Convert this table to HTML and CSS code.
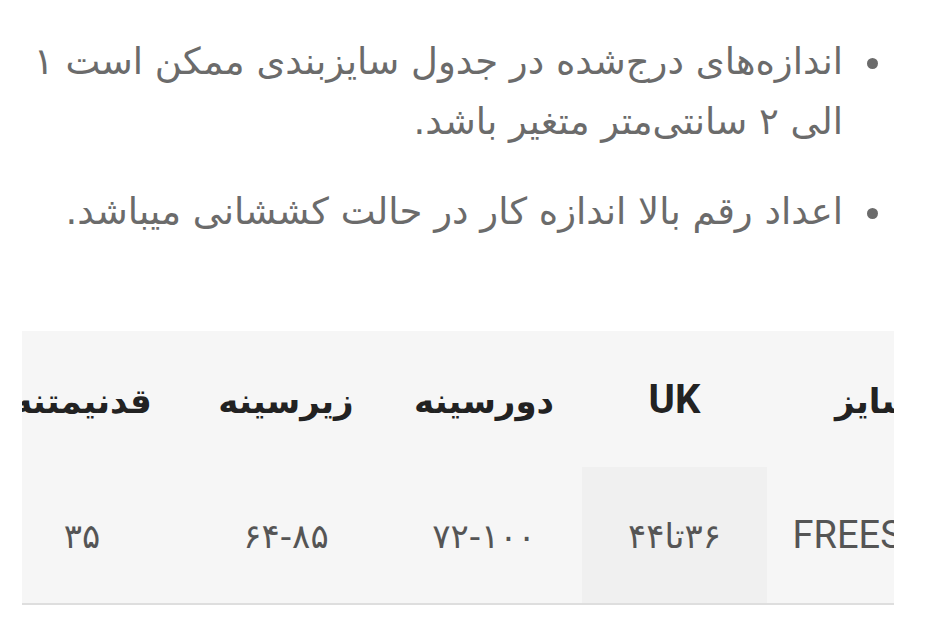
FILE: index.html
```html
<!DOCTYPE html>
<html lang="fa" dir="rtl">
<head>
  <meta charset="UTF-8" />
  <meta name="viewport" content="width=device-width, initial-scale=1.0" />
  <title>جدول سایزبندی</title>
  <link rel="stylesheet" href="styles.css">
</head>
<body>
  <div class="page">
    <!-- Notes -->
    <ul class="notes">
      <li>اندازه‌های درج‌شده در جدول سایزبندی ممکن است ۱ الی ۲ سانتی‌متر متغیر باشد.</li>
      <li>اعداد رقم بالا اندازه کار در حالت کششانی میباشد.</li>
    </ul>

    <!-- Size table -->
    <div class="table-wrap">
      <table class="sizes">
        <colgroup>
          <col class="c-size" />
          <col class="c-uk" />
          <col class="c-chest" />
          <col class="c-under" />
          <col class="c-len" />
        </colgroup>
        <thead>
          <tr>
            <th><span class="fa">سایز</span></th>
            <th>UK</th>
            <th><span class="fa">دورسینه</span></th>
            <th><span class="fa">زیرسینه</span></th>
            <th><span class="fa">قدنیمتنه</span></th>
          </tr>
        </thead>
        <tbody>
          <tr>
            <td>FREESIZE</td>
            <td class="hover"><span class="fa">۳۶تا۴۴</span></td>
            <td><span class="fa">۷۲-۱۰۰</span></td>
            <td><span class="fa">۶۴-۸۵</span></td>
            <td><span class="fa">۳۵</span></td>
          </tr>
        </tbody>
      </table>
    </div>
  </div>
</body>
</html>
```

FILE: styles.css
```css
/* Reset */
* { box-sizing: border-box; margin: 0; padding: 0; }
html, body { width: 100%; height: 100%; background: #fff; }
body { font-family: "DejaVu Sans", sans-serif; overflow: hidden; }

.page { padding: 32px 36px 0 22px; }

/* Notes list */
.notes { list-style: none; }
.notes li {
  position: relative;
  padding-right: 51px;
  font-size: 37px;
  line-height: 60px;
  color: #6b6b6b;
  margin-bottom: 30px;
}
.notes li::before {
  content: "";
  position: absolute;
  right: 16px; top: 26px;
  width: 11px; height: 11px;
  border-radius: 50%;
  background: #6b6b6b;
}

/* Size table */
.table-wrap {
  margin-top: 89px;
  overflow: hidden;
  background: #f6f6f6;
  border-bottom: 2px solid #dedede;
}
.sizes {
  width: 1005px;
  margin-right: -89px;
  table-layout: fixed;
  border-collapse: collapse;
  font-family: Roboto, "DejaVu Sans", sans-serif;
  font-size: 38px;
  text-align: center;
}
.c-size { width: 216px; }
.c-uk { width: 185px; }
.c-chest { width: 196px; }
.c-under { width: 200px; }
.c-len { width: 208px; }

.sizes th, .sizes td { height: 136px; padding: 0; white-space: nowrap; }
.sizes th { color: #222; font-weight: 700; font-size: 40px; }
.sizes td { color: #555; font-weight: 400; }
.sizes td.hover { background: #f0f0f0; }
.sizes .fa { font-family: "DejaVu Sans", sans-serif; font-size: 34px; }
```
